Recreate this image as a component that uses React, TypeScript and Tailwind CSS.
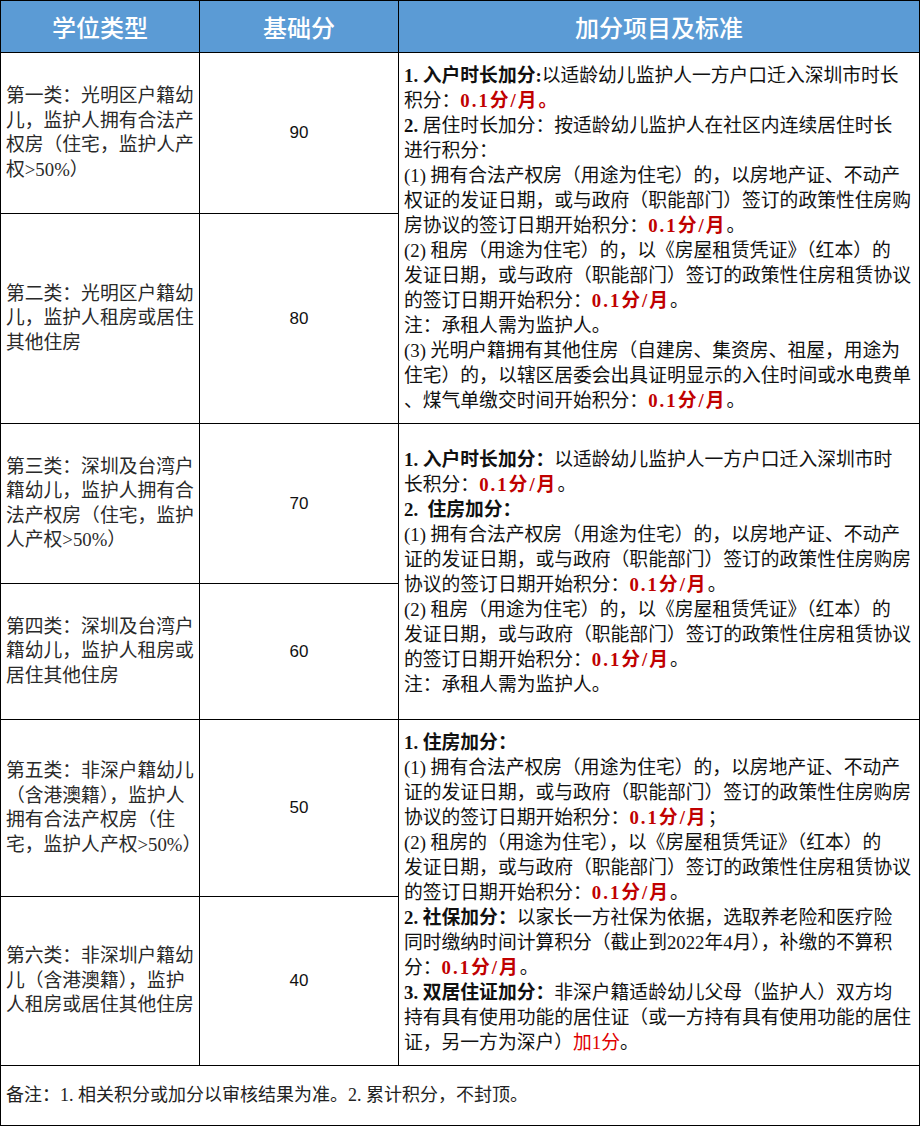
import type { ReactNode } from 'react';

const FONT = "font-['Liberation_Serif','Noto_Sans_CJK_SC',serif]";

function Red({ children }: { children: ReactNode }) {
  return <span className="font-bold tracking-[2px] text-[#c00000]">{children}</span>;
}

function B({ children }: { children: ReactNode }) {
  return <span className="font-bold">{children}</span>;
}

function TypeCell({ lines, row }: { lines: string[]; row: string }) {
  return (
    <div className={`${row} flex flex-col justify-center border-r border-b border-black px-[5px] text-[18.8px] leading-[24.5px] text-[#2a2a2a] whitespace-nowrap`}>
      {lines.map((l, i) => (
        <div key={i}>{l}</div>
      ))}
    </div>
  );
}

function ScoreCell({ value, row }: { value: string; row: string }) {
  return (
    <div className={`${row} flex items-center justify-center border-r border-b border-black font-['Liberation_Sans',sans-serif] text-[17px] text-[#111]`}>
      {value}
    </div>
  );
}

function RuleCell({ lines, row }: { lines: ReactNode[]; row: string }) {
  return (
    <div className={`${row} flex flex-col justify-center border-r border-b border-black pl-[5px] text-[18.8px] leading-[25px] text-[#111] whitespace-nowrap overflow-hidden`}>
      {lines.map((l, i) => (
        <div key={i}>{l}</div>
      ))}
    </div>
  );
}

const group1: ReactNode[] = [
  <><B>1. 入户时长加分:</B>以适龄幼儿监护人一方户口迁入深圳市时长</>,
  <>积分：<Red>0.1分/月。</Red></>,
  <><B>2.</B> 居住时长加分：按适龄幼儿监护人在社区内连续居住时长</>,
  <>进行积分：</>,
  <>(1) 拥有合法产权房（用途为住宅）的，以房地产证、不动产</>,
  <>权证的发证日期，或与政府（职能部门）签订的政策性住房购</>,
  <>房协议的签订日期开始积分：<Red>0.1分/月</Red>。</>,
  <>(2) 租房（用途为住宅）的，以《房屋租赁凭证》（红本）的</>,
  <>发证日期，或与政府（职能部门）签订的政策性住房租赁协议</>,
  <>的签订日期开始积分：<Red>0.1分/月</Red>。</>,
  <>注：承租人需为监护人。</>,
  <>(3) 光明户籍拥有其他住房（自建房、集资房、祖屋，用途为</>,
  <>住宅）的，以辖区居委会出具证明显示的入住时间或水电费单</>,
  <>、煤气单缴交时间开始积分：<Red>0.1分/月</Red>。</>,
];

const group2: ReactNode[] = [
  <><B>1. 入户时长加分：</B>以适龄幼儿监护人一方户口迁入深圳市时</>,
  <>长积分：<Red>0.1分/月</Red>。</>,
  <><B>2.&nbsp;&nbsp;住房加分：</B></>,
  <>(1) 拥有合法产权房（用途为住宅）的，以房地产证、不动产</>,
  <>证的发证日期，或与政府（职能部门）签订的政策性住房购房</>,
  <>协议的签订日期开始积分：<Red>0.1分/月</Red>。</>,
  <>(2) 租房（用途为住宅）的，以《房屋租赁凭证》（红本）的</>,
  <>发证日期，或与政府（职能部门）签订的政策性住房租赁协议</>,
  <>的签订日期开始积分：<Red>0.1分/月</Red>。</>,
  <>注：承租人需为监护人。</>,
];

const group3: ReactNode[] = [
  <><B>1. 住房加分：</B></>,
  <>(1) 拥有合法产权房（用途为住宅）的，以房地产证、不动产</>,
  <>证的发证日期，或与政府（职能部门）签订的政策性住房购房</>,
  <>协议的签订日期开始积分：<Red>0.1分/月</Red>；</>,
  <>(2) 租房的（用途为住宅），以《房屋租赁凭证》（红本）的</>,
  <>发证日期，或与政府（职能部门）签订的政策性住房租赁协议</>,
  <>的签订日期开始积分：<Red>0.1分/月</Red>。</>,
  <><B>2. 社保加分：</B>以家长一方社保为依据，选取养老险和医疗险</>,
  <>同时缴纳时间计算积分（截止到2022年4月），补缴的不算积</>,
  <>分：<Red>0.1分/月</Red>。</>,
  <><B>3. 双居住证加分：</B>非深户籍适龄幼儿父母（监护人）双方均</>,
  <>持有具有使用功能的居住证（或一方持有具有使用功能的居住</>,
  <>证，另一方为深户）<span className="text-[#e00000]">加1分</span>。</>,
];

export default function App() {
  return (
    <div className={`${FONT} w-[920px] bg-white`}>
      <div className="grid grid-cols-[199px_199px_521px] grid-rows-[52px_161px_210px_160px_136px_177px_169px_60px] border-l border-t border-black">
        {/* header */}
        {['学位类型', '基础分', '加分项目及标准'].map((h) => (
          <div
            key={h}
            className="flex items-center justify-center border-r border-b border-black bg-[#5b9bd5] font-['Noto_Sans_CJK_SC',sans-serif] text-[24px] font-medium text-white"
          >
            {h}
          </div>
        ))}

        <TypeCell row="row-start-2 col-start-1" lines={['第一类：光明区户籍幼', '儿，监护人拥有合法产', '权房（住宅，监护人产', '权>50%）']} />
        <ScoreCell row="row-start-2 col-start-2" value="90" />
        <RuleCell row="row-start-2 row-span-2 col-start-3" lines={group1} />

        <TypeCell row="row-start-3 col-start-1" lines={['第二类：光明区户籍幼', '儿，监护人租房或居住', '其他住房']} />
        <ScoreCell row="row-start-3 col-start-2" value="80" />

        <TypeCell row="row-start-4 col-start-1" lines={['第三类：深圳及台湾户', '籍幼儿，监护人拥有合', '法产权房（住宅，监护', '人产权>50%）']} />
        <ScoreCell row="row-start-4 col-start-2" value="70" />
        <RuleCell row="row-start-4 row-span-2 col-start-3" lines={group2} />

        <TypeCell row="row-start-5 col-start-1" lines={['第四类：深圳及台湾户', '籍幼儿，监护人租房或', '居住其他住房']} />
        <ScoreCell row="row-start-5 col-start-2" value="60" />

        <TypeCell row="row-start-6 col-start-1" lines={['第五类：非深户籍幼儿', '（含港澳籍），监护人', '拥有合法产权房（住', '宅，监护人产权>50%）']} />
        <ScoreCell row="row-start-6 col-start-2" value="50" />
        <RuleCell row="row-start-6 row-span-2 col-start-3" lines={group3} />

        <TypeCell row="row-start-7 col-start-1" lines={['第六类：非深圳户籍幼', '儿（含港澳籍），监护', '人租房或居住其他住房']} />
        <ScoreCell row="row-start-7 col-start-2" value="40" />

        {/* footer note */}
        <div className="row-start-8 col-span-3 flex items-center border-r border-b border-black px-[5px] text-[18px] text-[#222]">
          备注：1. 相关积分或加分以审核结果为准。2. 累计积分，不封顶。
        </div>
      </div>
    </div>
  );
}
